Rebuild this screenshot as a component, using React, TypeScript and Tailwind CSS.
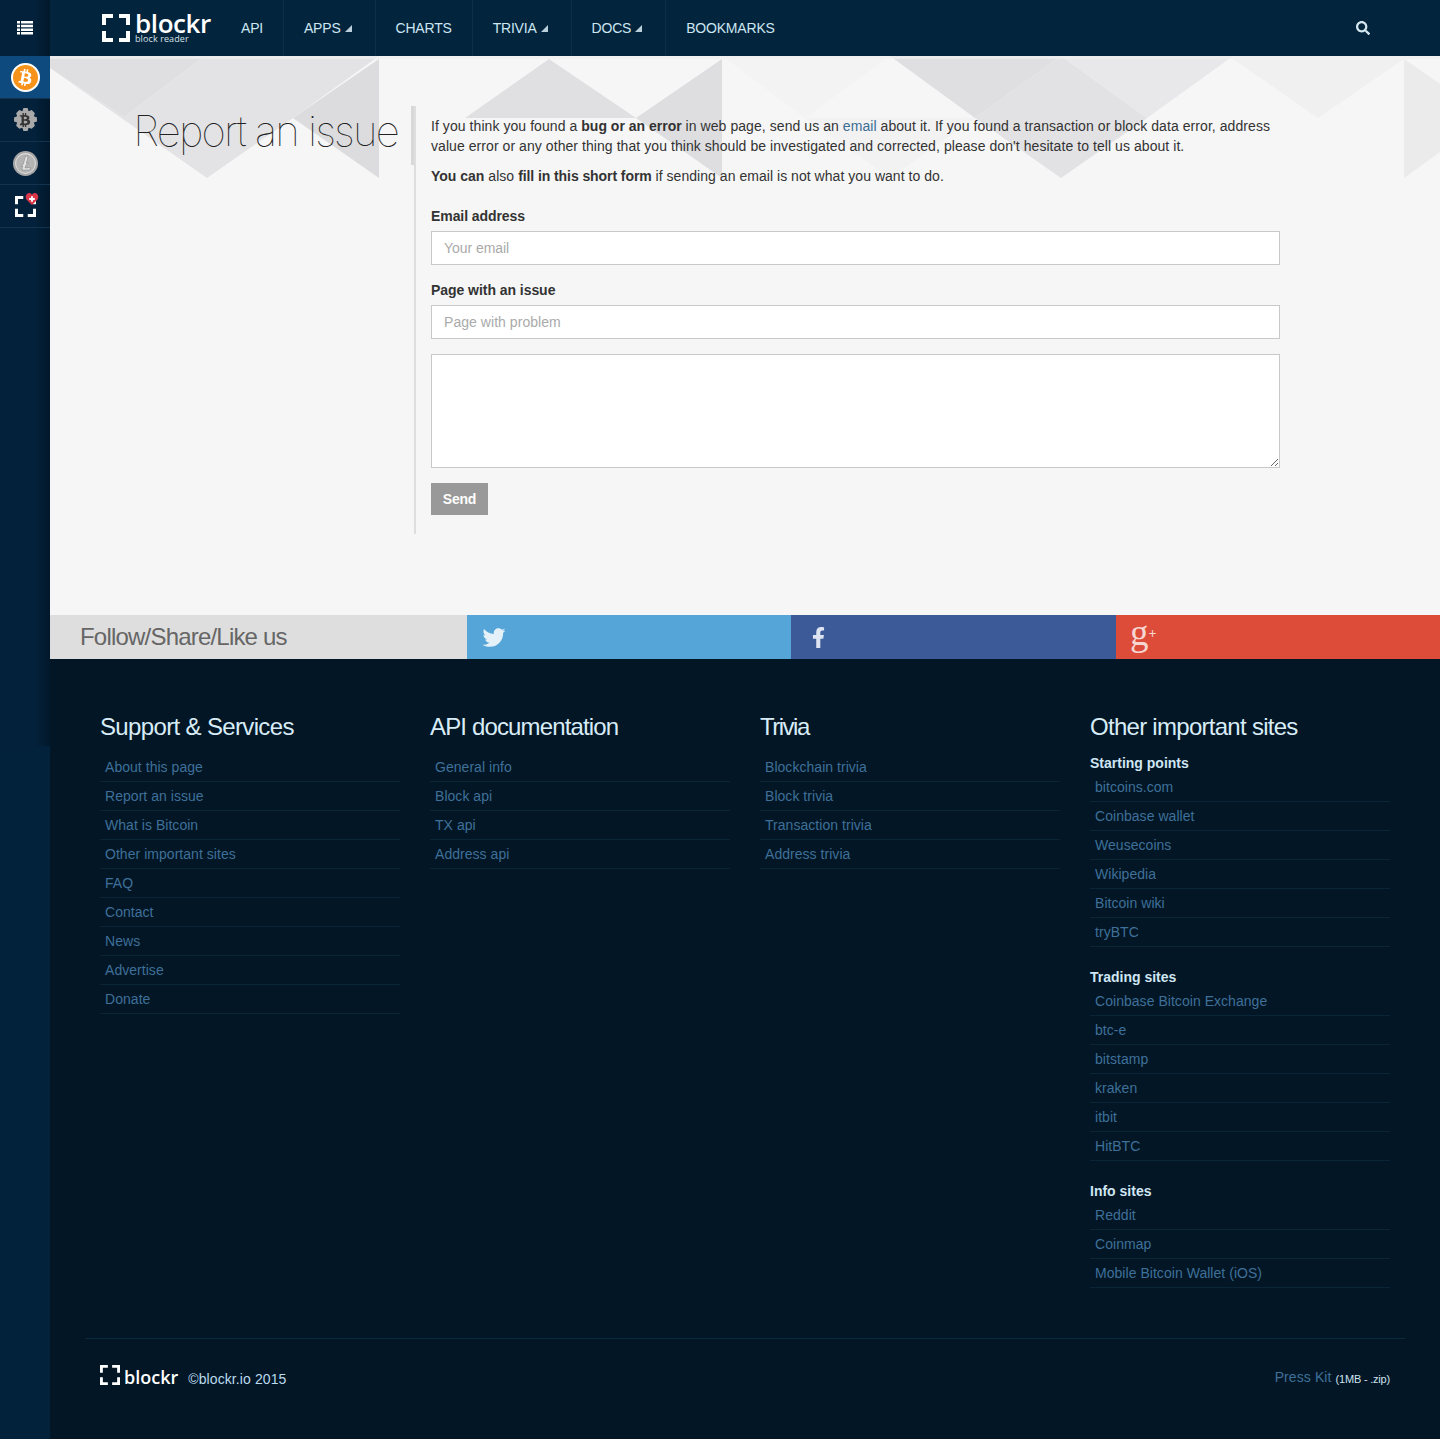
import React from "react";
import { FaBtc, FaFacebookF, FaSearch, FaTwitter } from "react-icons/fa";

const support = ["About this page", "Report an issue", "What is Bitcoin", "Other important sites", "FAQ", "Contact", "News", "Advertise", "Donate"];
const api = ["General info", "Block api", "TX api", "Address api"];
const trivia = ["Blockchain trivia", "Block trivia", "Transaction trivia", "Address trivia"];
const starting = ["bitcoins.com", "Coinbase wallet", "Weusecoins", "Wikipedia", "Bitcoin wiki", "tryBTC"];
const trading = ["Coinbase Bitcoin Exchange", "btc-e", "bitstamp", "kraken", "itbit", "HitBTC"];
const info = ["Reddit", "Coinmap", "Mobile Bitcoin Wallet (iOS)"];

function Brackets({ className }: { className: string }) {
  return (
    <svg viewBox="0 0 28 28" className={className} fill="#fff">
      <path d="M0 0h11v4H4v7H0zM17 0h11v11h-4V4h-7zM0 17h4v7h7v4H0zM24 17h4v11H17v-4h7z" />
    </svg>
  );
}

function Links({ items }: { items: string[] }) {
  return (
    <ul>
      {items.map((t) => (
        <li key={t} className="h-[29px] border-b border-[#0b2538] pl-[5px] text-[14px] leading-[28px] tracking-[0.04px] text-[#3f7099]">
          {t}
        </li>
      ))}
    </ul>
  );
}

function Column({ title, items, track }: { title: string; items: string[]; track: string }) {
  return (
    <div>
      <h3 className={`mb-[12px] h-[28px] text-[24px] leading-[28px] font-light text-[#d8ecf7] ${track}`}>{title}</h3>
      <Links items={items} />
    </div>
  );
}

function Group({ title, items }: { title: string; items: string[] }) {
  return (
    <div className="mb-[20px]">
      <h4 className="h-[20px] text-[14px] leading-[20px] font-bold text-[#cfe6f3]">{title}</h4>
      <Links items={items} />
    </div>
  );
}

function NavItem({ label, caret, last }: { label: string; caret?: boolean; last?: boolean }) {
  return (
    <div className={`flex h-full items-center gap-[4px] pl-[20px] text-[14px] tracking-[-0.2px] text-[#cde6f2] ${caret ? "pr-[23px]" : "pr-[20px]"} ${last ? "" : "border-r border-[#0c3049]"}`}>
      <span>{label}</span>
      {caret && (
        <svg viewBox="0 0 7 7" className="mt-[1px] h-[7px] w-[7px]" fill="#b9cfdb">
          <path d="M7 0v7H0z" />
        </svg>
      )}
    </div>
  );
}

function SideRow({ active, children }: { active?: boolean; children: React.ReactNode }) {
  return (
    <div className={`flex h-[43px] items-center justify-center border-b border-[#12324f] ${active ? "bg-[#0e4a7e]" : ""}`}>
      {children}
    </div>
  );
}

function Triangles() {
  return (
    <svg className="absolute left-0 top-0 h-[130px] w-[1390px]" viewBox="50 56 1390 130">
      <polygon points="1061,56 1147,118 1061,178 975,118" fill="#e2e2e4" />
      <polygon points="50,68 124,117 205,56 379,56 293,118 207,178" fill="#e3e3e5" />
      <polygon points="50,56 205,56 124,117 50,68" fill="#dfdfe1" />
      <polygon points="379,59 379,178 293,118" fill="#dcdcde" />
      <polygon points="549,59 636,118 465,118" fill="#e0e0e2" />
      <polygon points="722,59 722,178 636,118" fill="#dedee0" />
      <polygon points="722,56 890,56 805,118" fill="#f3f3f4" />
      <polygon points="805,118 975,118 890,178" fill="#f2f2f3" />
      <polygon points="890,56 1061,56 975,118" fill="#dfdfe1" />
      <polygon points="1061,56 1233,56 1147,118" fill="#e8e8ea" />
      <polygon points="1233,59 1404,59 1318,118" fill="#f0f0f1" />
      <polygon points="1404,59 1440,84 1440,152 1404,178" fill="#ebebec" />
      <rect x="50" y="56" width="1390" height="3" fill="#efefef" fillOpacity="0.7" />
    </svg>
  );
}

export default function App() {
  return (
    <div className="flex min-h-[1439px] w-[1440px] font-['Liberation_Sans',Arial,sans-serif] text-[14px] leading-[20px] text-[#333]">
      <aside className="w-[50px] shrink-0 bg-[#02223b]">
        <div className="h-[746px] bg-gradient-to-r from-[#03213a] from-70% to-[#01182b]">
          <div className="flex h-[56px] items-center justify-center">
            <svg viewBox="0 0 16 14" className="h-[14px] w-[16px]" fill="#fff">
              <path d="M0 0h3v2.500H0zM4 0h12v2.500H4zM0 3.700h3v2.500H0zM4 3.700h12v2.500H4zM0 7.400h3v2.500H0zM4 7.400h12v2.500H4zM0 11.100h3v2.500H0zM4 11.100h12v2.500H4z" />
            </svg>
          </div>
          <SideRow active>
            <div className="flex h-[29px] w-[29px] items-center justify-center rounded-full border-2 border-white bg-[#f7931a]">
              <FaBtc className="h-[17px] w-[17px] rotate-[10deg] text-white" />
            </div>
          </SideRow>
          <SideRow>
            <div className="relative flex h-[25px] w-[25px] items-center justify-center">
              <svg viewBox="0 0 24 24" className="absolute inset-0 h-full w-full" fill="#a9a9a9">
                <path d="M10 0h4l1 3 3-1 3 3-1 3 3 1v4l-3 1 1 3-3 3-3-1-1 3h-4l-1-3-3 1-3-3 1-3-3-1v-4l3-1-1-3 3-3 3 1z" />
              </svg>
              <FaBtc className="relative h-[14px] w-[14px] text-[#333]" />
            </div>
          </SideRow>
          <SideRow>
            <svg viewBox="0 0 24 24" className="h-[25px] w-[25px]">
              <circle cx="12" cy="12" r="12" fill="#a6a6a6" />
              <circle cx="12" cy="12" r="9.500" fill="#b4b4b4" stroke="#dcdcdc" strokeWidth="1" />
              <path d="M12 5h2.500l-1.800 7 2-.8-.4 1.500-2 .8-.8 2.700h5.500l-.6 2H8.500l1-4-1.800.7.400-1.500 1.800-.7z" fill="#e6e6e6" stroke="#7f7f7f" strokeWidth="0.5" />
            </svg>
          </SideRow>
          <SideRow>
            <div className="relative ml-[1px] h-[22px] w-[22px]">
              <Brackets className="absolute bottom-0 left-0 h-[21px] w-[21px]" />
              <svg viewBox="0 0 14 13" className="absolute right-[-2px] top-[-2px] h-[12px] w-[14px]">
                <path d="M7 13L1 7C-1 4 1 0 4 0c1.300 0 2.300.7 3 2 .7-1.300 1.700-2 3-2 3 0 5 4 3 7z" fill="#d9364a" />
                <path d="M6 3.500h2v2h2v2H8v2H6v-2H4v-2h2z" fill="#fff" />
              </svg>
            </div>
          </SideRow>
        </div>
      </aside>

      <div className="flex min-w-0 flex-1 flex-col">
        <header className="flex h-[56px] items-center bg-[#02243c]">
          <div className="flex w-[171px] shrink-0 items-center pl-[52px]">
            <Brackets className="h-[28px] w-[28px] shrink-0" />
            <div className="ml-[5px] flex flex-col font-['Open_Sans',sans-serif] text-white">
              <span className="h-[21px] text-[26px] leading-[21px] font-semibold tracking-[-0.4px]">blockr</span>
              <span className="h-[9px] text-[9px] leading-[9px] tracking-[0.1px] text-[#d7e3ea]">block reader</span>
            </div>
          </div>
          <nav className="flex h-full">
            <NavItem label="API" />
            <NavItem label="APPS" caret />
            <NavItem label="CHARTS" />
            <NavItem label="TRIVIA" caret />
            <NavItem label="DOCS" caret />
            <NavItem label="BOOKMARKS" last />
          </nav>
          <FaSearch className="ml-auto mr-[70px] h-[14px] w-[14px] text-[#d4e6ef]" />
        </header>

        <main className="relative h-[559px] overflow-hidden bg-[#f6f6f6]">
          <Triangles />
          <div className="relative flex pt-[50px]">
            <div className="h-[59px] w-[364px] shrink-0 border-r-[3px] border-[#d8d8d8] pr-[13px] text-right font-['Inter',sans-serif] text-[42px] leading-[50px] font-thin tracking-[-1.8px] text-[#222]">
              Report an issue
            </div>
            <div className="h-[428px] w-[866px] border-l-2 border-[#dedede] pl-[15px] pt-[10px]">
              <p className="tracking-[0.065px]">
                If you think you found a <b className="tracking-normal">bug or an error</b> in web page, send us an <span className="text-[#3a6d94]">email</span> about it. If you found a transaction or block data error, address value error or any other thing that you think should be investigated and corrected, please don't hesitate to tell us about it.
              </p>
              <p className="mt-[10px] tracking-[0.04px]">
                <b className="tracking-normal">You can</b> also <b className="tracking-[-0.08px]">fill in this short form</b> if sending an email is not what you want to do.
              </p>
              <form>
                <label className="mt-[20px] block h-[25px] font-bold tracking-[-0.08px]">Email address</label>
                <input className="block h-[34px] w-[849px] border border-[#c9c9c9] bg-white px-[12px] text-[14px] tracking-[-0.05px] outline-none placeholder:text-[#aaa]" placeholder="Your email" />
                <label className="mt-[15px] block h-[25px] font-bold tracking-[-0.05px]">Page with an issue</label>
                <input className="block h-[34px] w-[849px] border border-[#c9c9c9] bg-white px-[12px] text-[14px] tracking-[0.05px] outline-none placeholder:text-[#aaa]" placeholder="Page with problem" />
                <textarea className="mt-[15px] block h-[114px] w-[849px] border border-[#c9c9c9] bg-white px-[12px] py-[6px] outline-none" />
                <button type="button" className="mt-[15px] block h-[32px] w-[57px] bg-[#999] text-center text-[14px] font-bold tracking-[-0.2px] text-white">
                  Send
                </button>
              </form>
            </div>
          </div>
        </main>

        <section className="flex h-[44px]">
          <div className="w-[417px] bg-[#dedede] pl-[30px] text-[24px] leading-[44px] font-light tracking-[-0.8px] text-[#666]">Follow/Share/Like us</div>
          <div className="flex w-[324px] items-center bg-[#55a5d8] pl-[15px]">
            <FaTwitter className="h-[23px] w-[24px] text-[#e4f1f9]" />
          </div>
          <div className="flex w-[325px] items-center bg-[#3d5a98] pl-[21px]">
            <FaFacebookF className="h-[23px] w-[13px] text-[#dde3f0]" />
          </div>
          <div className="flex-1 bg-[#dd4b39] pl-[14px] font-['Liberation_Serif',serif] leading-[36px] text-[#f6d6d1]">
            <span className="text-[37px]">g</span>
            <sup className="text-[14px] font-bold">+</sup>
          </div>
        </section>

        <footer className="flex-1 bg-[#021625] px-[50px] pt-[54px]">
          <div className="grid grid-cols-[300px_300px_300px_300px] gap-x-[30px]">
            <Column title="Support & Services" items={support} track="tracking-[-0.65px]" />
            <Column title="API documentation" items={api} track="tracking-[-0.85px]" />
            <Column title="Trivia" items={trivia} track="tracking-[-1.5px]" />
            <div>
              <h3 className="mb-[12px] h-[28px] text-[24px] leading-[28px] font-light tracking-[-0.72px] text-[#d8ecf7]">Other important sites</h3>
              <Group title="Starting points" items={starting} />
              <Group title="Trading sites" items={trading} />
              <Group title="Info sites" items={info} />
            </div>
          </div>
          <div className="mx-[-15px] mt-[30px] flex h-[101px] items-start border-t border-[#0b2a40] px-[15px] pt-[26px]">
            <Brackets className="h-[20px] w-[20px] shrink-0" />
            <span className="ml-[4px] font-['Open_Sans',sans-serif] text-[18px] leading-[24px] font-semibold text-white">blockr</span>
            <span className="ml-[10px] mt-[4px] text-[14px] tracking-[0.1px] text-[#bcdcef]">©blockr.io 2015</span>
            <span className="ml-auto mt-[2px] text-[14px] tracking-[0.1px] text-[#3f7099]">Press Kit</span>
            <span className="ml-[4px] mt-[4px] text-[11px] tracking-[-0.2px] text-[#cfe3ef]">(1MB - .zip)</span>
          </div>
        </footer>
      </div>
    </div>
  );
}
